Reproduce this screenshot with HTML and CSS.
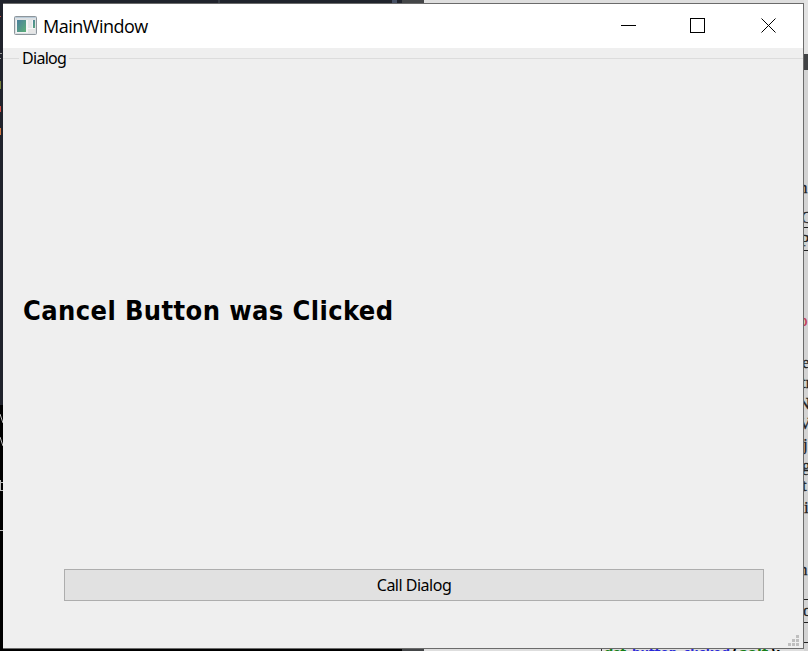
FILE: index.html
```html
<!DOCTYPE html>
<html lang="en">
<head>
<meta charset="utf-8">
<title>MainWindow</title>
<link rel="stylesheet" href="styles.css">
</head>
<body>
<svg class="desktop" width="808" height="651" viewBox="0 0 808 651" aria-hidden="true">
  <rect width="403" height="651" fill="#20232c"/>
  <rect y="405" width="403" height="246" fill="#000"/>
  <rect x="218" width="2" height="4" fill="#353a43"/>
  <rect x="392" width="5" height="4" fill="#465064"/>
  <rect x="402" width="22" height="651" fill="#444648"/>
  <rect x="424" width="384" height="651" fill="#dedede"/>
  <rect x="804" width="4" height="651" fill="#d3d3d3"/>
  <rect x="804" y="0" width="4" height="54" fill="#e2e2e2"/>
  <rect x="803" y="54" width="5" height="16" fill="#404244"/>
  <g fill="#202020">
    <rect x="803" y="227" width="5" height="1"/>
    <rect x="803" y="250" width="5" height="1"/>
    <rect x="803" y="599" width="5" height="1"/>
    <rect x="803" y="622" width="5" height="1"/>
    <rect x="803" y="642" width="5" height="1"/>
  </g>
  <rect y="81" width="1" height="8" fill="#75803a"/>
  <g fill="#c94f45"><rect y="106" width="1" height="6"/><rect y="128" width="1" height="7" fill="#d07843"/><rect y="16" width="1" height="1"/></g>
  <g fill="#9a9a9a"><rect y="53" width="2" height="1"/><rect y="58" width="1" height="1"/></g>
  <path d="M0 414l3 9M0 437l3 9M0 482.500h3M.5 480v10M0 490.500h3M0 530.500h3" stroke="#bbb" fill="none"/>
  <g class="page-text">
    <text x="799" y="193">n</text>
    <text x="801" y="223">C</text>
    <text x="800" y="246">P</text>
    <text class="accent" x="799" y="326">o</text>
    <text x="802" y="368">e</text>
    <text x="801" y="388">tr</text>
    <text x="798" y="409">N</text>
    <text x="799" y="429">V</text>
    <text x="803" y="450">j</text>
    <text x="802" y="471">g</text>
    <text x="802" y="491">t</text>
    <text x="804" y="513">i</text>
    <text x="799" y="575">n</text>
    <text x="803" y="616">o</text>
  </g>
  <rect x="601" y="648" width="1" height="3" fill="#333"/>
  <g class="code">
    <text x="604" y="657" textLength="22" fill="#168016">def</text>
    <text x="632" y="657" textLength="98" lengthAdjust="spacingAndGlyphs" fill="#2929d9">button_clicked</text>
    <text x="732" y="657">(</text>
    <text x="739" y="657" textLength="29" lengthAdjust="spacingAndGlyphs" fill="#168016">self</text>
    <text x="770" y="657" textLength="11" lengthAdjust="spacingAndGlyphs">):</text>
  </g>
</svg>
<main class="window">
  <header class="titlebar">
    <svg class="app-icon" width="23" height="20" viewBox="0 0 23 20">
      <defs><linearGradient id="pane" x2="1" y2="1"><stop stop-color="#4b7f9e"/><stop offset="1" stop-color="#5caf78"/></linearGradient></defs>
      <rect x=".5" y=".5" width="22" height="18" rx="1" fill="#dde1e4" stroke="#8e969c"/>
      <path d="M1 1.500h21" stroke="#b9cbd8"/>
      <rect x="2" y="4" width="19" height="13" fill="#f5f5f5"/>
      <rect x="3" y="4" width="9" height="12" fill="url(#pane)"/>
      <rect x="14" y="4" width="4" height="8" fill="#e5e7e8"/>
      <rect x="19" y="4" width="2" height="8" fill="url(#pane)"/>
      <rect x="14" y="13" width="7" height="4" fill="#e6e6e6"/>
    </svg>
    <span class="title">MainWindow</span>
    <svg class="controls" width="156" height="16" viewBox="0 0 156 16" fill="none" stroke="#000" shape-rendering="crispEdges">
      <path d="M0 7.500h15M69.500.5h14v14h-14z"/>
      <path d="M140.500.5l14 14M154.500.5l-14 14" shape-rendering="auto"/>
    </svg>
  </header>
  <section class="group">
    <div class="group-title"><span>Dialog</span></div>
    <h1 class="message"><span>Cancel Button was Clicked</span></h1>
    <button class="call" type="button"><span>Call Dialog</span></button>
    <svg class="grip" width="11" height="11" viewBox="0 0 11 11" fill="#bfbfbf"><path d="M8 0h3v3h-3zM4 4h3v3h-3zM8 4h3v3h-3zM0 8h3v3h-3zM4 8h3v3h-3zM8 8h3v3h-3z"/></svg>
  </section>
</main>
</body>
</html>
```
FILE: styles.css
```css
* { box-sizing: border-box; }
body {
  margin: 0;
  height: 651px;
  overflow: hidden;
  padding: 3px 0 0 3px;
  background: #000;
  color: #000;
  font-family: "Noto Sans", sans-serif;
}
.desktop { position: absolute; left: 0; top: 0; }
.page-text { font: 17px "Liberation Serif", serif; fill: #222; stroke: #222; stroke-width: .3px; }
.accent { fill: #c33b58; stroke: #c33b58; }
.code { font: bold 13px "DejaVu Sans", sans-serif; }
.window {
  position: relative;
  display: flex;
  flex-direction: column;
  width: 801px;
  height: 646px;
  border: solid #6b6b6b;
  border-width: 1px 1px 1px 0;
  background: #efefef;
}
.titlebar {
  display: flex;
  align-items: center;
  flex: 0 0 44px;
  padding: 0 26px 0 11px;
  background: #fff;
}
.app-icon { margin-bottom: 1px; }
.title {
  margin-left: 6px;
  font: 18px/24px "Open Sans", sans-serif;
  letter-spacing: -.5px;
}
.controls { margin-left: auto; }
.group {
  display: flex;
  flex-direction: column;
  flex: 1;
  min-height: 0;
}
.group-title {
  display: flex;
  align-items: center;
  height: 21px;
  font-size: 16px;
  line-height: 20px;
  letter-spacing: -.7px;
}
.group-title span { margin-top: -2px; }
.group-title::before { content: ""; width: 16px; height: 1px; background: #dcdcdc; margin-right: 3px; }
.group-title::after { content: ""; flex: 1; height: 1px; background: #dcdcdc; margin-left: 3px; }
.message {
  display: flex;
  align-items: center;
  height: 482px;
  margin: 0 0 0 20px;
  padding-top: 2px;
  font-family: "DejaVu Sans Condensed", "DejaVu Sans", sans-serif;
  font-stretch: condensed;
  font-size: 27px;
  line-height: 36px;
  font-weight: 700;
  letter-spacing: .4px;
  white-space: nowrap;
}
.call {
  height: 32px;
  margin: 18px 39px 0 61px;
  padding: 0;
  border: 1px solid #adadad;
  background: #e1e1e1;
  color: #000;
  font: 16px/20px "Noto Sans", sans-serif;
  letter-spacing: -.5px;
}
.grip { align-self: flex-end; margin: auto 4px 2px 0; }
```
